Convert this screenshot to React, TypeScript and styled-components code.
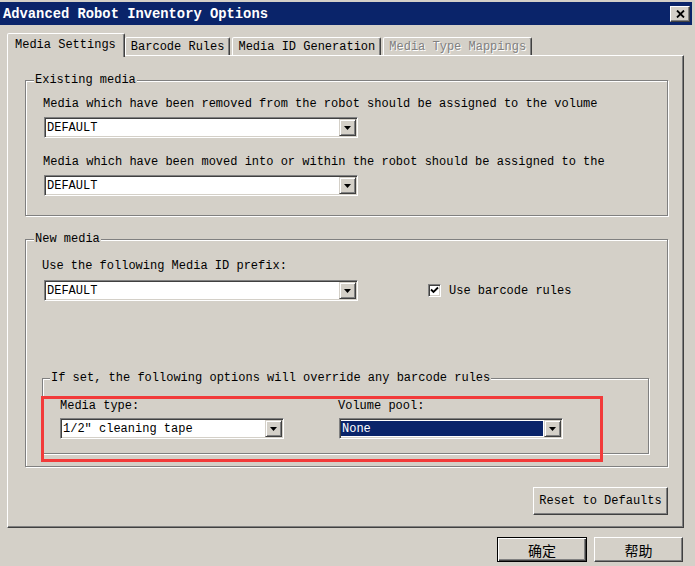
import React from 'react';
import styled, { createGlobalStyle, css } from 'styled-components';

const FACE = '#d4d0c8'
const SHADOW = '#808080'
const DARK = '#404040'
const NAVY = '#0a246a'

const GlobalStyle = createGlobalStyle`
  html, body {
    margin: 0;
    padding: 0;
    background: ${FACE};
  }
`

const Window = styled.div`
  position: relative;
  width: 695px;
  height: 566px;
  overflow: hidden;
  background: ${FACE};
  display: flex;
  flex-direction: column;
  font-family: "Liberation Mono", "Courier New", monospace;
  font-size: 12px;
  line-height: 14px;
  color: #000;
`

const TitleBar = styled.div`
  margin: 2px 3px 0 0;
  height: 23px;
  background: ${NAVY};
  display: flex;
  align-items: center;
  justify-content: space-between;
  padding: 0 2px 0 3px;
`

const TitleText = styled.div`
  color: #fff;
  font-weight: bold;
  font-size: 13.8px;
  padding-top: 2px;
`

const CloseButton = styled.div`
  width: 20px;
  height: 16px;
  box-sizing: border-box;
  background: ${FACE};
  border: 1px solid;
  border-color: #fff ${DARK} ${DARK} #fff;
  box-shadow: inset -1px -1px 0 ${SHADOW};
  display: flex;
  align-items: center;
  justify-content: center;
`

const Body = styled.div`
  padding: 8px 11px 0 7px;
  display: flex;
  flex-direction: column;
`

const TabStrip = styled.div`
  height: 22px;
  display: flex;
  align-items: flex-end;
  padding-left: 2px;
`

const Tab = styled.div<{ $active?: boolean; $disabled?: boolean }>`
  position: relative;
  box-sizing: border-box;
  height: 18px;
  padding: 0 5px;
  margin-right: 2px;
  display: flex;
  align-items: center;
  white-space: nowrap;
  background: ${FACE};
  border: 1px solid;
  border-bottom: none;
  border-color: #fff ${DARK} transparent #fff;
  border-radius: 2px 2px 0 0;
  box-shadow: inset -1px 0 0 ${SHADOW};
  ${p => p.$disabled && css`
    color: ${SHADOW};
    text-shadow: 1px 1px 0 #fff;
  `}
  ${p => p.$active && css`
    z-index: 1;
    height: 24px;
    margin: 0 0 -2px -2px;
    padding: 0 8px 2px 7px;
  `}
`

const TabPanel = styled.div`
  box-sizing: border-box;
  height: 473px;
  border: 1px solid;
  border-color: #fff ${DARK} ${DARK} #fff;
  box-shadow: inset -1px -1px 0 ${SHADOW};
  padding: 17px 15px 12px 17px;
  display: flex;
  flex-direction: column;
`

const Group = styled.fieldset<{ $pt: number; $pr: number; $pb: number; $pl: number; $mt?: number }>`
  margin: ${p => p.$mt ?? 0}px 0 0 0;
  min-width: 0;
  padding: ${p => `${p.$pt}px ${p.$pr}px ${p.$pb}px ${p.$pl}px`};
  border: 1px solid ${SHADOW};
  box-shadow: 1px 1px 0 #fff, inset 1px 1px 0 #fff;
`

const Legend = styled.legend<{ $offset: number }>`
  margin-left: ${p => p.$offset}px;
  padding: 0 1px;
  line-height: 14px;
  background: ${FACE};
`

const FieldLabel = styled.div<{ $mt?: number; $mb?: number }>`
  margin-top: ${p => p.$mt ?? 0}px;
  margin-bottom: ${p => p.$mb ?? 6}px;
  padding-top: 1px;
  line-height: 13px;
  white-space: nowrap;
`

const Combo = styled.div<{ $width: number; $ml?: number }>`
  box-sizing: border-box;
  width: ${p => p.$width}px;
  height: 21px;
  margin-left: ${p => p.$ml ?? 0}px;
  padding: 1px;
  display: flex;
  background: #fff;
  border: 1px solid;
  border-color: ${SHADOW} #fff #fff ${SHADOW};
  box-shadow: inset 1px 1px 0 ${DARK}, inset -1px -1px 0 ${FACE};
`

const ComboField = styled.div`
  flex: 1;
  height: 17px;
  padding: 1px 1px 1px 0;
  box-sizing: border-box;
  display: flex;
`

const ComboText = styled.span<{ $selected?: boolean }>`
  flex: 1;
  line-height: 16px;
  padding-left: 1px;
  white-space: nowrap;
  ${p => p.$selected && css`
    background: ${NAVY};
    color: #fff;
  `}
`

const ArrowButton = styled.div`
  box-sizing: border-box;
  width: 17px;
  height: 17px;
  background: ${FACE};
  border: 1px solid;
  border-color: ${FACE} ${DARK} ${DARK} ${FACE};
  box-shadow: inset 1px 1px 0 #fff, inset -1px -1px 0 ${SHADOW};
  display: flex;
  align-items: center;
  justify-content: center;
`

const PrefixRow = styled.div`
  display: flex;
  align-items: center;
`

const CheckLabel = styled.label`
  display: flex;
  align-items: center;
  gap: 8px;
  margin-left: 70px;
  white-space: nowrap;
`

const CheckBox = styled.span`
  box-sizing: border-box;
  width: 13px;
  height: 13px;
  background: #fff;
  border: 1px solid;
  border-color: ${SHADOW} #fff #fff ${SHADOW};
  box-shadow: inset 1px 1px 0 ${DARK}, inset -1px -1px 0 ${FACE};
  display: flex;
  align-items: center;
  justify-content: center;
`

const OverrideColumns = styled.div`
  display: flex;
  gap: 54px;
`

const Column = styled.div`
  display: flex;
  flex-direction: column;
`

const Button = styled.button<{ $width: number; $default?: boolean; $cjk?: boolean }>`
  box-sizing: border-box;
  width: ${p => p.$width}px;
  height: ${p => (p.$cjk ? 25 : 28)}px;
  padding: 0;
  background: ${FACE};
  border: 1px solid;
  border-color: #fff ${DARK} ${DARK} #fff;
  box-shadow: inset -1px -1px 0 ${SHADOW};
  font-family: ${p => (p.$cjk ? '"Noto Sans CJK SC", sans-serif' : '"Liberation Mono", monospace')};
  font-size: ${p => (p.$cjk ? 14 : 12)}px;
  color: #000;
  ${p => p.$default && css`
    border-color: #000;
    box-shadow: inset 1px 1px 0 #fff, inset -1px -1px 0 ${DARK}, inset -2px -2px 0 ${SHADOW};
  `}
`

const ResetButton = styled(Button)`
  margin-top: auto;
  align-self: flex-end;
`

const Footer = styled.div`
  margin-top: 9px;
  padding-right: 1px;
  display: flex;
  justify-content: flex-end;
  gap: 7px;
`

// annotation drawn over the screenshot
const Highlight = styled.div`
  position: absolute;
  left: 41px;
  top: 396px;
  width: 562px;
  height: 66px;
  box-sizing: border-box;
  border: 3px solid #f23a3a;
  pointer-events: none;
`

const DownArrow = () => (
  <svg width="7" height="4" viewBox="0 0 7 4">
    <polygon points="0,0 7,0 3.5,4" fill="#000" />
  </svg>
)

function ComboBox({ value, width, ml, selected }: { value: string; width: number; ml?: number; selected?: boolean }) {
  return (
    <Combo $width={width} $ml={ml}>
      <ComboField>
        <ComboText $selected={selected}>{value}</ComboText>
      </ComboField>
      <ArrowButton>
        <DownArrow />
      </ArrowButton>
    </Combo>
  )
}

const TABS = [
  { label: 'Media Settings', active: true },
  { label: 'Barcode Rules' },
  { label: 'Media ID Generation' },
  { label: 'Media Type Mappings', disabled: true },
]

function App() {
  return (
    <>
      <GlobalStyle />
      <Window>
        <TitleBar>
          <TitleText>Advanced Robot Inventory Options</TitleText>
          <CloseButton>
            <svg width="9" height="8" viewBox="0 0 9 8">
              <path d="M1 0.5 L8 7.5 M8 0.5 L1 7.5" stroke="#000" strokeWidth="1.8" />
            </svg>
          </CloseButton>
        </TitleBar>
        <Body>
          <TabStrip>
            {TABS.map(tab => (
              <Tab key={tab.label} $active={tab.active} $disabled={tab.disabled}>{tab.label}</Tab>
            ))}
          </TabStrip>
          <TabPanel>
            <Group $pt={10} $pr={16} $pb={19} $pl={17}>
              <Legend $offset={-9}>Existing media</Legend>
              <FieldLabel>Media which have been removed from the robot should be assigned to the volume</FieldLabel>
              <ComboBox value="DEFAULT" width={314} ml={1} />
              <FieldLabel $mt={17}>Media which have been moved into or within the robot should be assigned to the</FieldLabel>
              <ComboBox value="DEFAULT" width={314} ml={1} />
            </Group>
            <Group $mt={16} $pt={13} $pr={18} $pb={12} $pl={16}>
              <Legend $offset={-8}>New media</Legend>
              <FieldLabel $mb={7}>Use the following Media ID prefix:</FieldLabel>
              <PrefixRow>
                <ComboBox value="DEFAULT" width={314} ml={2} />
                <CheckLabel>
                  <CheckBox>
                    <svg width="9" height="9" viewBox="0 0 9 9">
                      <path d="M1 3.5 L3.5 6 L8 1.5" stroke="#000" strokeWidth="1.8" fill="none" />
                    </svg>
                  </CheckBox>
                  Use barcode rules
                </CheckLabel>
              </PrefixRow>
              <Group $mt={70} $pt={14} $pr={16} $pb={14} $pl={17}>
                <Legend $offset={-10}>If set, the following options will override any barcode rules</Legend>
                <OverrideColumns>
                  <Column>
                    <FieldLabel $mb={5}>Media type:</FieldLabel>
                    <ComboBox value={'1/2" cleaning tape'} width={224} />
                  </Column>
                  <Column>
                    <FieldLabel $mb={5}>Volume pool:</FieldLabel>
                    <ComboBox value="None" width={224} ml={1} selected />
                  </Column>
                </OverrideColumns>
              </Group>
            </Group>
            <ResetButton $width={135}>Reset to Defaults</ResetButton>
          </TabPanel>
          <Footer>
            <Button $width={90} $cjk $default>确定</Button>
            <Button $width={89} $cjk>帮助</Button>
          </Footer>
        </Body>
        <Highlight />
      </Window>
    </>
  );
}

export default App;
